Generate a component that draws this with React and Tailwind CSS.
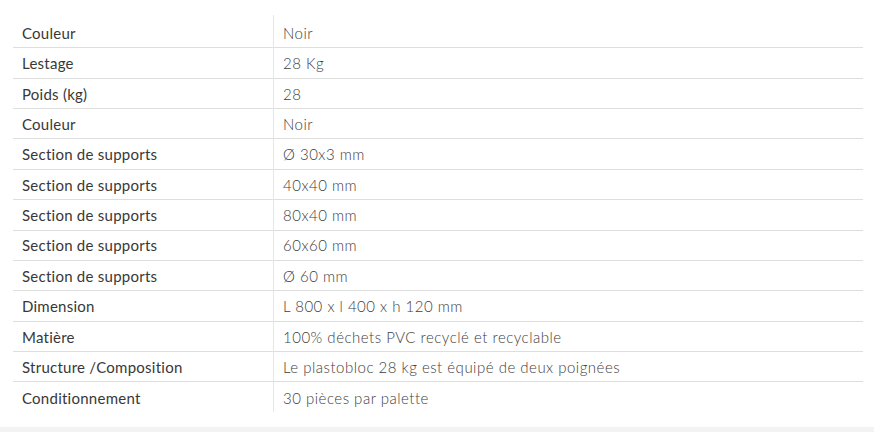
const rows = [
  ['Couleur', 'Noir'],
  ['Lestage', '28 Kg'],
  ['Poids (kg)', '28'],
  ['Couleur', 'Noir'],
  ['Section de supports', 'Ø 30x3 mm'],
  ['Section de supports', '40x40 mm'],
  ['Section de supports', '80x40 mm'],
  ['Section de supports', '60x60 mm'],
  ['Section de supports', 'Ø 60 mm'],
  ['Dimension', 'L 800 x l 400 x h 120 mm'],
  ['Matière', '100% déchets PVC recyclé et recyclable'],
  ['Structure /Composition', 'Le plastobloc 28 kg est équipé de deux poignées'],
  ['Conditionnement', '30 pièces par palette'],
]

export default function App() {
  return (
    <div className="w-[874px] h-[432px] bg-white flex flex-col font-['Lato','Open_Sans',sans-serif] overflow-hidden">
      <div className="flex-1 pt-[15px] pl-[13px] pr-[11px]">
        <div className="relative">
          <div className="absolute left-[260px] top-0 h-[397px] w-px bg-[#e6e6e6]" />
          <div className="pt-[3px]">
            {rows.map(([label, value], i) => (
              <div
                key={i}
                className={`flex items-center pt-px h-[30.36px] ${i < rows.length - 1 ? 'border-b border-[#dedede]' : ''}`}
              >
                <div className="w-[260px] pl-[9px] text-[15px] text-[#383838] tracking-[0.25px]">{label}</div>
                <div className="pl-[10px] text-[15px] text-[#404040] font-light tracking-[0.5px]">{value}</div>
              </div>
            ))}
          </div>
        </div>
      </div>
      <div className="h-[5px] bg-[#f3f3f3]" />
    </div>
  )
}
